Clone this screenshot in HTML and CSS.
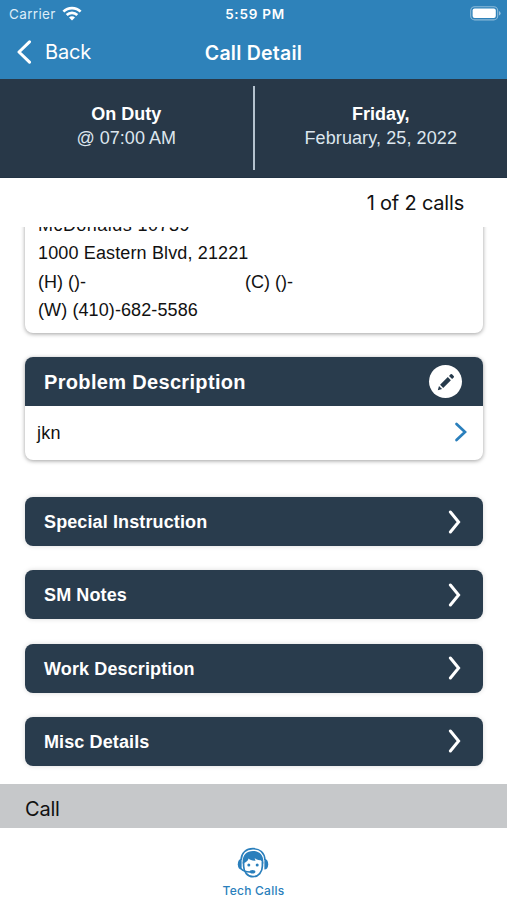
FILE: index.html
```html
<!DOCTYPE html>
<html lang="en">
<head>
  <meta charset="UTF-8" />
  <meta name="viewport" content="width=device-width, initial-scale=1.0" />
  <title>Call Detail</title>
  <link rel="stylesheet" href="styles.css">
</head>
<body>
  <header>
    <div class="status-bar">
      <div class="carrier">
        <span>Carrier</span>
        <svg width="20" height="15" viewBox="0 0 20 15" fill="none" stroke="#fff" stroke-width="2.7">
          <path d="M1.4 5.6a12.2 12.2 0 0 1 17.2 0" />
          <path d="M4.7 9a7.5 7.5 0 0 1 10.6 0" />
          <path d="M10 14.4L7 11.4a4.2 4.2 0 0 1 6 0z" fill="#fff" stroke="none" />
        </svg>
      </div>
      <span class="time">5:59 PM</span>
      <svg class="battery" width="31" height="15" viewBox="0 0 31 15">
        <rect x="0.7" y="0.7" width="27" height="13.2" rx="4" fill="none" stroke="#fff" stroke-opacity="0.45" stroke-width="1.1" />
        <rect x="2.6" y="2.6" width="23.2" height="9.4" rx="2" fill="#fff" />
        <path d="M29 5v4.6q1.6-.7 1.6-2.3T29 5z" fill="#fff" fill-opacity="0.5" />
      </svg>
    </div>
    <nav>
      <a class="back" href="#">
        <svg width="16" height="24" viewBox="0 0 16 24" fill="none" stroke="#fff" stroke-width="3" stroke-linecap="round" stroke-linejoin="round">
          <path d="M13.500 1.800L3 12l10.500 10.200" />
        </svg>
        <span>Back</span>
      </a>
      <h1>Call Detail</h1>
    </nav>
  </header>

  <section class="duty">
    <div class="duty-item">
      <strong>On Duty</strong>
      <span class="duty-time">@ 07:00 AM</span>
    </div>
    <div class="divider"></div>
    <div class="duty-item">
      <strong>Friday,</strong>
      <span class="duty-date">February, 25, 2022</span>
    </div>
  </section>

  <div class="count"><span>1 of 2 calls</span></div>

  <main>
    <div class="card customer">
      <p class="name">McDonalds 10739</p>
      <p class="address">1000 Eastern Blvd, 21221</p>
      <p class="phones"><span>(H) ()-</span><span>(C) ()-</span></p>
      <p class="work">(W) (410)-682-5586</p>
    </div>

    <div class="card problem">
      <div class="problem-header">
        <h2>Problem Description</h2>
        <button class="btn-edit" aria-label="Edit">
          <svg width="18" height="18" viewBox="0 0 18 18" fill="#263a4b">
            <path d="M.8 17.200l1.200-4.300 3.100 3.100z" />
            <path d="M3.100 11.800l7.700-7.700 3.100 3.100-7.700 7.700z" />
            <path d="M12 2.900l1.600-1.600q.7-.7 1.400 0l1.700 1.700q.7.7 0 1.400l-1.600 1.600z" />
          </svg>
        </button>
      </div>
      <div class="problem-body">
        <span>jkn</span>
        <svg width="14" height="20" viewBox="0 0 14 20" fill="none" stroke="#2a7fbc" stroke-width="2.7" stroke-linecap="round">
          <path d="M2.500 2l8.500 8-8.500 8" />
        </svg>
      </div>
    </div>

    <div class="rows">
      <a class="row" href="#"><span>Special Instruction</span>
        <svg width="14" height="24" viewBox="0 0 14 24"><path d="M2.400 2l8.200 10-8.200 10" /></svg></a>
      <a class="row" href="#"><span>SM Notes</span>
        <svg width="14" height="24" viewBox="0 0 14 24"><path d="M2.400 2l8.200 10-8.200 10" /></svg></a>
      <a class="row" href="#"><span>Work Description</span>
        <svg width="14" height="24" viewBox="0 0 14 24"><path d="M2.400 2l8.200 10-8.200 10" /></svg></a>
      <a class="row" href="#"><span>Misc Details</span>
        <svg width="14" height="24" viewBox="0 0 14 24"><path d="M2.400 2l8.200 10-8.200 10" /></svg></a>
    </div>
  </main>

  <div class="call-bar">Call</div>

  <footer>
    <a class="tab" href="#">
      <svg width="32" height="32" viewBox="0 0 32 32" fill="#2a7fbc">
        <path d="M4 13C4.500 5.500 9.300 1.700 16 1.700S27.500 5.500 28 13" fill="none" stroke="#2a7fbc" stroke-width="1.700" />
        <path d="M4.600 12v10.500C2.200 22.500.8 20.500.8 17.200S2.200 12 4.600 12z" />
        <path d="M27.400 12v10.500c2.400 0 3.800-2 3.800-5.300S29.800 12 27.400 12z" />
        <path d="M6.600 15v4c0 6 4 10.700 9.400 10.700S25.400 25 25.400 19v-4" fill="none" stroke="#2a7fbc" stroke-width="1.700" />
        <path d="M5.800 17C4.600 9 9.200 4 16 4s11.400 5 10.200 13l-2.400-3.800c-2.800.2-4.700-.7-6-2.200 0 1.300.4 2 1 2.600-3.600.2-5.700-.5-7.200-2-.7 2.600-2.500 3.600-4.200 4.200z" />
        <circle cx="11.800" cy="18" r="1.500" />
        <circle cx="20.200" cy="18" r="1.500" />
        <path d="M4 21.500c2 2.700 5 3.500 9 3.500" fill="none" stroke="#2a7fbc" stroke-width="1.500" />
        <ellipse cx="15.500" cy="24.800" rx="2.900" ry="1.800" />
      </svg>
      <span>Tech Calls</span>
    </a>
  </footer>
</body>
</html>
```

FILE: styles.css
```css
* { box-sizing: border-box; }
body { margin: 0; height: 900px; display: flex; flex-direction: column; overflow: hidden; background: #fff; color: #111; font-family: "Liberation Sans", Arial, sans-serif; }
a { text-decoration: none; color: inherit; }
h1, h2, p { margin: 0; }
svg { display: block; flex: none; }

header { height: 79px; background: #2e82ba; color: #fff; font-family: Inter, sans-serif; }
.status-bar { height: 27px; padding: 0 6px 0 9px; display: grid; grid-template-columns: 1fr auto 1fr; align-items: center; font-size: 13.5px; }
.carrier { display: flex; align-items: center; gap: 6px; letter-spacing: 0.35px; color: #dcedf8; }
.time { font-weight: 600; letter-spacing: 0.75px; }
.battery { justify-self: end; }
nav { height: 50px; padding: 0 16px; display: grid; grid-template-columns: 1fr auto 1fr; align-items: center; }
.back { display: flex; align-items: center; gap: 13px; font-size: 20px; letter-spacing: -0.2px; }
h1 { padding-top: 1px; font-size: 19.5px; font-weight: 600; letter-spacing: 0.25px; }

.duty { height: 99px; padding: 7px 0; display: grid; grid-template-columns: 1fr 2px 1fr; background: #283848; border-bottom: 1px solid #223344; color: #fff; font-size: 18px; line-height: 24px; text-align: center; }
.duty-item { padding-top: 16px; display: flex; flex-direction: column; align-items: center; }
.duty-item span { color: #dde6ee; }
.duty-date { letter-spacing: 0.1px; }
.divider { background: #b4c2ce; }

.count { height: 49px; padding: 0 43px; display: flex; align-items: center; justify-content: flex-end; font-family: Inter, sans-serif; font-size: 20px; letter-spacing: -0.2px; }

main { height: 557px; padding: 0 24px 0 25px; display: flex; flex-direction: column; overflow: hidden; }
.card { border-radius: 8px; background: #fff; box-shadow: 0 1px 4px rgba(0,0,0,0.38); }
.customer { height: 136px; margin-top: -30px; padding: 14px 13px 0; font-size: 18px; line-height: 28.3px; flex: none; }
.name { letter-spacing: 0.45px; }
.address { letter-spacing: 0.14px; }
.work { letter-spacing: 0.1px; }
.phones { display: grid; grid-template-columns: 207px 1fr; }
.problem { height: 103px; margin-top: 24px; flex: none; }
.problem-header { height: 49px; padding: 0 21px 0 19px; border-radius: 8px 8px 0 0; background: #293c4d; color: #fff; display: flex; align-items: center; justify-content: space-between; }
h2 { padding-top: 2px; font-size: 20px; letter-spacing: 0.33px; }
.btn-edit { width: 33px; height: 33px; padding: 0; border: none; border-radius: 50%; background: #fff; display: flex; align-items: center; justify-content: center; }
.problem-body { height: 52px; padding: 0 15px 0 12px; display: flex; align-items: center; justify-content: space-between; font-size: 18px; }
.problem-body span { padding-top: 2px; letter-spacing: 0.2px; }
.rows { margin-top: 37px; display: flex; flex-direction: column; gap: 24.3px; }
.row { height: 49px; padding: 0 21px 0 19px; border-radius: 8px; background: #293c4d; box-shadow: 0 0 5px rgba(0,0,0,0.15); color: #fff; display: flex; align-items: center; justify-content: space-between; font-size: 18px; font-weight: bold; letter-spacing: 0.12px; }
.row span { padding-top: 2px; }
.row svg { fill: none; stroke: #fff; stroke-width: 3; stroke-linecap: round; }

.call-bar { height: 44px; padding: 5px 25px 0; background: #c6c8ca; font-family: Inter, sans-serif; font-size: 20px; line-height: 40px; letter-spacing: -0.2px; }
footer { height: 72px; display: flex; justify-content: center; }
.tab { padding-top: 19px; display: flex; flex-direction: column; align-items: center; gap: 4px; color: #2a7fbc; font-family: Inter, sans-serif; font-size: 12px; font-weight: 500; line-height: 15px; letter-spacing: 0.25px; }
```
